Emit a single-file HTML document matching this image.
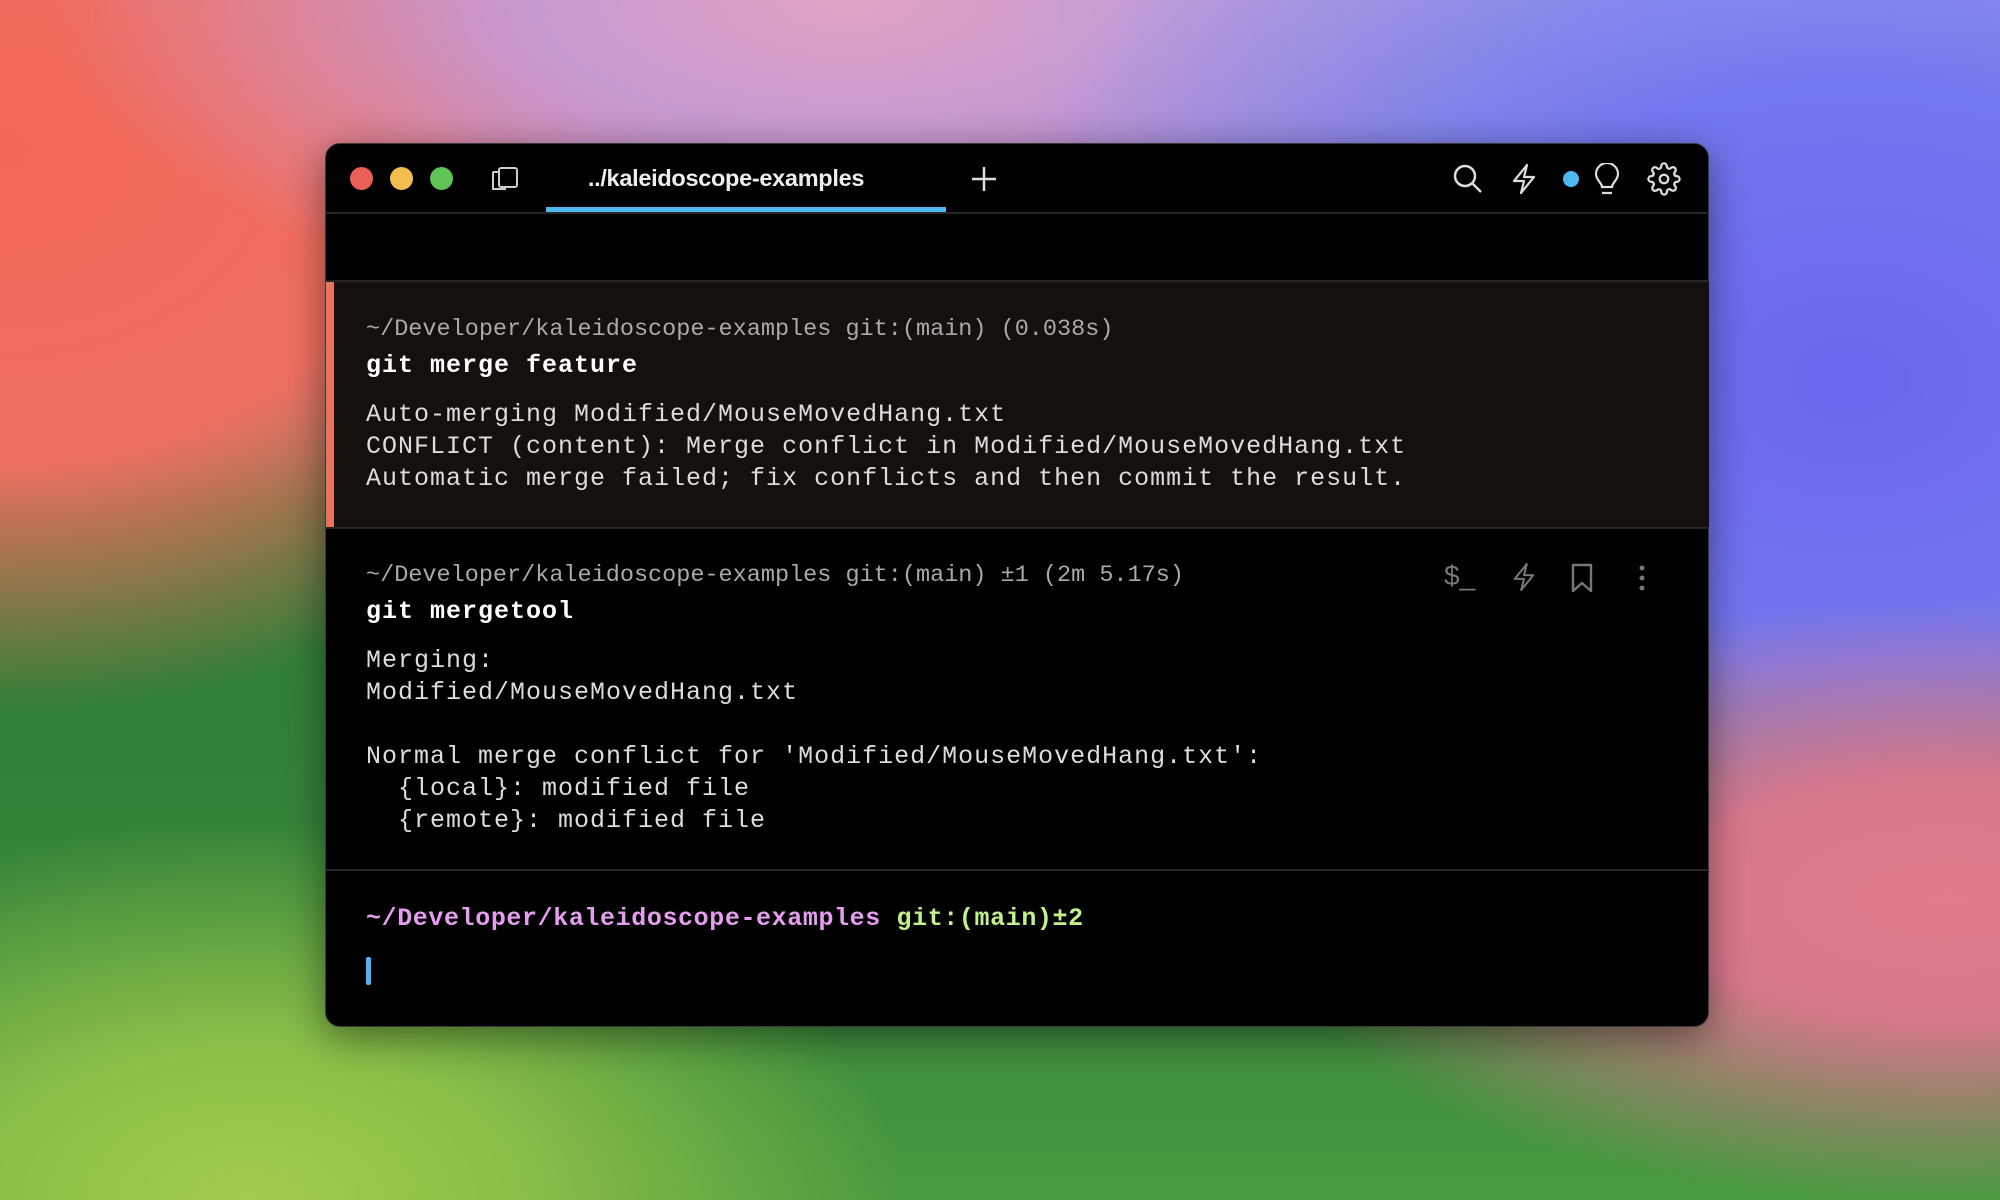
<!DOCTYPE html>
<html><head><meta charset="utf-8"><style>
*{margin:0;padding:0;box-sizing:border-box}
html,body{width:2000px;height:1200px;overflow:hidden}
body{position:relative;background:
radial-gradient(ellipse 650px 380px at 250px 1200px,#a0cc4c 0%,#8cbf48 40%,rgba(140,191,72,0) 100%),
radial-gradient(ellipse 700px 300px at 1950px 900px,#e07a8c 0%,#d8788c 40%,rgba(216,120,140,0) 100%),
radial-gradient(ellipse 900px 650px at 1850px 380px,#6a66ee 0%,#7278ee 45%,rgba(114,120,238,0) 100%),
radial-gradient(ellipse 800px 380px at 1800px 0px,#a4b2f6 0%,rgba(164,178,246,0) 100%),
radial-gradient(ellipse 800px 330px at 850px 0px,#e0a4c4 0%,#c898d0 40%,rgba(200,152,208,0) 100%),
radial-gradient(ellipse 750px 560px at 0px 150px,#f26858 0%,#f07060 55%,rgba(240,112,96,0) 100%),
linear-gradient(180deg,#c08ab8 0%,#9a80c0 20%,#2e7a36 42%,#35853a 75%,#4a9a40 100%);}
.win{position:absolute;left:325px;top:143px;width:1384px;height:884px;background:#000;border-radius:15px;overflow:hidden;box-shadow:0 10px 40px rgba(0,0,0,.45);border:1px solid #3a3a3a}
.dot{position:absolute;width:23px;height:23px;border-radius:50%;top:167px}
.mono{position:absolute;left:366px;font-family:"Liberation Mono",monospace;font-size:25px;letter-spacing:1px;white-space:pre;line-height:32px}
.g{color:#a9a9a9;font-size:23.5px;letter-spacing:0}.w{color:#dcdcdc}.b{color:#fff;font-weight:bold}
.hr{position:absolute;left:326px;width:1383px;height:2px;background:#262626}
svg{position:absolute}
</style></head><body>
<div class="win"></div>
<div class="dot" style="left:350px;background:#ec5f56"></div>
<div class="dot" style="left:390px;background:#f4bd4f"></div>
<div class="dot" style="left:430px;background:#5fc454"></div>
<svg style="left:490px;top:166px" width="30" height="26" viewBox="0 0 30 26" fill="none" stroke="#ccc" stroke-width="2"><rect x="9" y="2" width="18" height="19" rx="2"/><path d="M9 6H4a1 1 0 0 0-1 1v16h13"/></svg>
<div style="position:absolute;left:526px;width:400px;top:165px;text-align:center;font-family:'Liberation Sans',sans-serif;font-weight:bold;font-size:23.5px;color:#eee;letter-spacing:-0.3px">../kaleidoscope-examples</div>
<div style="position:absolute;left:546px;top:207px;width:400px;height:6px;background:#4fb8f0"></div>
<svg style="left:970px;top:165px" width="28" height="28" viewBox="0 0 28 28" stroke="#ddd" stroke-width="2.5"><path d="M14 2v24M2 14h24"/></svg>
<svg style="left:1452px;top:163px" width="32" height="32" viewBox="0 0 32 32" fill="none" stroke="#ddd" stroke-width="2.5"><circle cx="13" cy="13" r="10"/><path d="M20.5 20.5L29 29"/></svg>
<svg style="left:1510px;top:163px" width="28" height="32" viewBox="0 0 28 32" fill="none" stroke="#ddd" stroke-width="2.2" stroke-linejoin="round"><path d="M17 2L4 18h10l-3 12 13-16H14z"/></svg>
<div style="position:absolute;left:1563px;top:171px;width:16px;height:16px;border-radius:50%;background:#4fb8f0"></div>
<svg style="left:1594px;top:163px" width="26" height="34" viewBox="0 0 26 34" fill="none" stroke="#ddd" stroke-width="2.2"><path d="M8 24c0-4-6-7-6-13a11 11 0 0 1 22 0c0 6-6 9-6 13z"/><path d="M8 30h10"/></svg>
<svg style="left:1647px;top:162px" width="34" height="34" viewBox="0 0 24 24" fill="none" stroke="#ddd" stroke-width="1.6"><circle cx="12" cy="12" r="3"/><path d="M19.4 15a1.65 1.65 0 0 0 .33 1.82l.06.06a2 2 0 1 1-2.830 2.83l-.06-.06a1.65 1.65 0 0 0-1.82-.33 1.65 1.65 0 0 0-1 1.51V21a2 2 0 1 1-4 0v-.09A1.65 1.65 0 0 0 9 19.4a1.65 1.65 0 0 0-1.82.33l-.06.06a2 2 0 1 1-2.83-2.83l.06-.06A1.65 1.65 0 0 0 4.68 15a1.65 1.65 0 0 0-1.51-1H3a2 2 0 1 1 0-4h.09A1.65 1.65 0 0 0 4.6 9a1.65 1.65 0 0 0-.33-1.820l-.06-.06a2 2 0 1 1 2.83-2.83l.06.06A1.65 1.65 0 0 0 9 4.68a1.65 1.65 0 0 0 1-1.51V3a2 2 0 1 1 4 0v.09a1.65 1.65 0 0 0 1 1.51 1.65 1.65 0 0 0 1.82-.33l.06-.06a2 2 0 1 1 2.83 2.83l-.06.06A1.65 1.65 0 0 0 19.4 9a1.65 1.65 0 0 0 1.51 1H21a2 2 0 1 1 0 4h-.09a1.65 1.65 0 0 0-1.51 1z"/></svg>
<div class="hr" style="top:212px"></div>
<div class="hr" style="top:280px"></div>
<div style="position:absolute;left:326px;top:282px;width:1383px;height:245px;background:#15100d"></div>
<div style="position:absolute;left:326px;top:282px;width:8px;height:245px;background:#e8735f"></div>
<div class="hr" style="top:527px"></div>
<div class="mono g" style="top:314px">~/Developer/kaleidoscope-examples git:(main) (0.038s)</div>
<div class="mono b" style="top:350px">git merge feature</div>
<div class="mono w" style="top:399px">Auto-merging Modified/MouseMovedHang.txt
CONFLICT (content): Merge conflict in Modified/MouseMovedHang.txt
Automatic merge failed; fix conflicts and then commit the result.</div>
<div class="mono g" style="top:560px">~/Developer/kaleidoscope-examples git:(main) ±1 (2m 5.17s)</div>
<div class="mono b" style="top:596px">git mergetool</div>
<div class="mono w" style="top:645px">Merging:
Modified/MouseMovedHang.txt

Normal merge conflict for 'Modified/MouseMovedHang.txt':
  {local}: modified file
  {remote}: modified file</div>
<div style="position:absolute;left:1444px;top:560px;font-family:'Liberation Sans',sans-serif;font-size:28px;color:#777">$_</div>
<svg style="left:1511px;top:561px" width="26" height="32" viewBox="0 0 28 32" fill="none" stroke="#777" stroke-width="2.2" stroke-linejoin="round"><path d="M17 2L4 18h10l-3 12 13-16H14z"/></svg>
<svg style="left:1570px;top:563px" width="24" height="30" viewBox="0 0 24 30" fill="none" stroke="#777" stroke-width="2.4" stroke-linejoin="round"><path d="M3 2h18v26l-9-8-9 8z"/></svg>
<svg style="left:1636px;top:564px" width="12" height="28" viewBox="0 0 12 28" fill="#777"><circle cx="6" cy="4" r="2.5"/><circle cx="6" cy="14" r="2.5"/><circle cx="6" cy="24" r="2.5"/></svg>
<div class="hr" style="top:869px"></div>
<div class="mono" style="top:903px;font-weight:bold;letter-spacing:0.6px"><span style="color:#e69df0">~/Developer/kaleidoscope-examples</span> <span style="color:#c2f08a">git:(main)±2</span></div>
<div style="position:absolute;left:366px;top:957px;width:5px;height:28px;background:#4fb8f0;border-radius:2px"></div>
</body></html>
